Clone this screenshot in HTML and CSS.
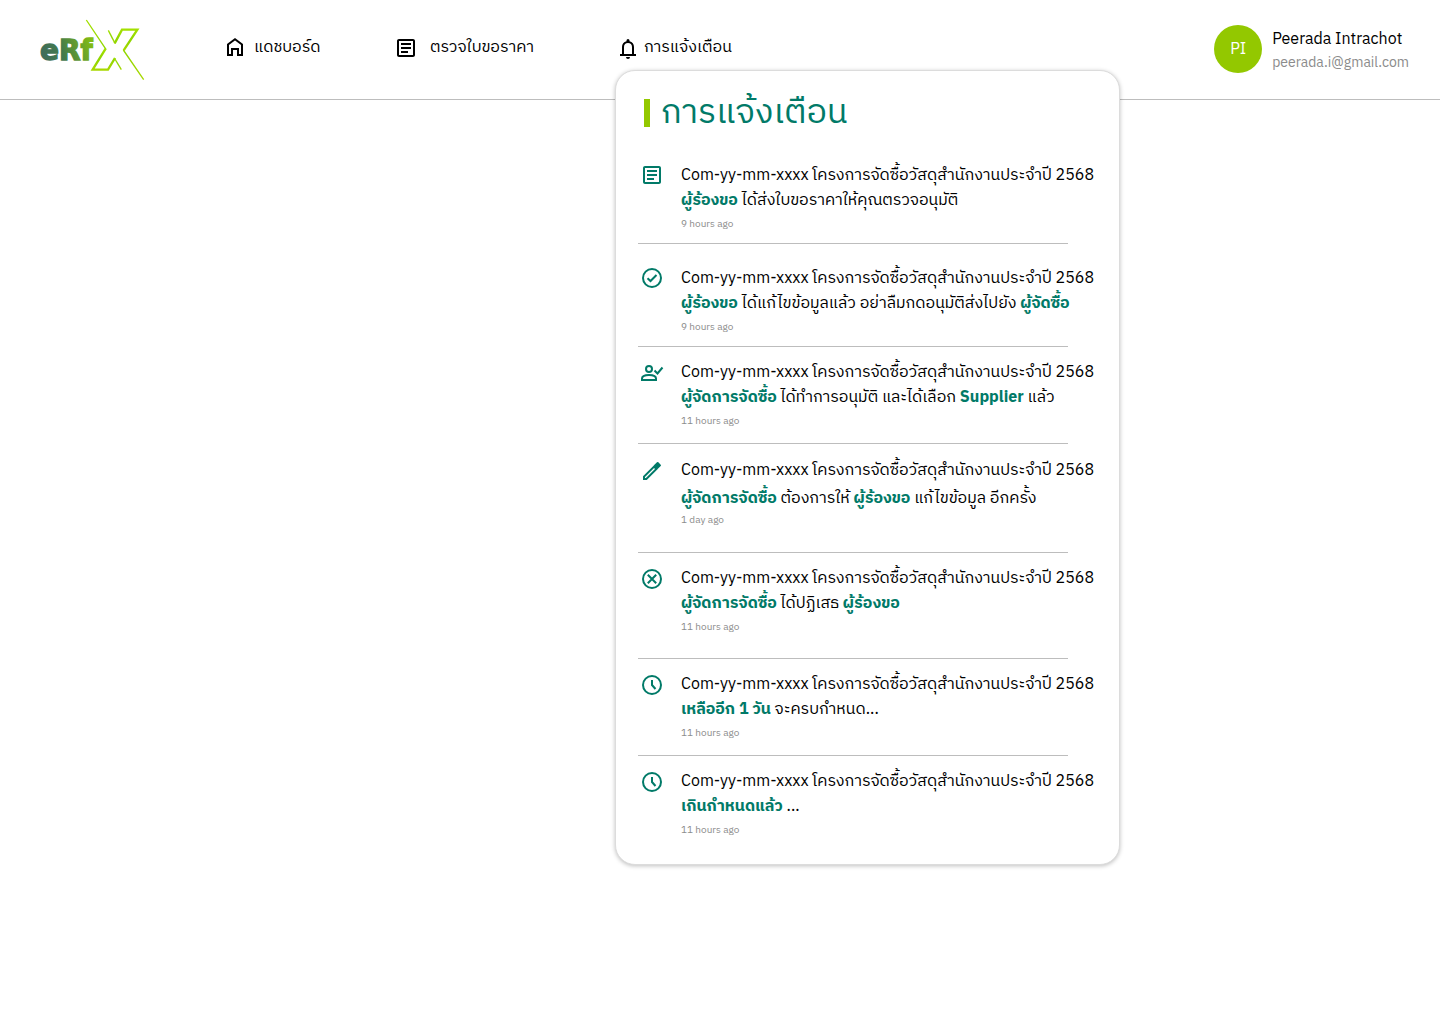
FILE: index.html
```html
<!DOCTYPE html>
<html lang="th">
<head>
<meta charset="utf-8">
<meta name="viewport" content="width=device-width, initial-scale=1">
<title>eRfX</title>
<link rel="stylesheet" href="styles.css">
</head>
<body>
<svg class="sprite" aria-hidden="true">
  <symbol id="doc" viewBox="0 0 24 24"><path d="M19 5v14H5V5h14m0-2H5c-1.100 0-2 .9-2 2v14c0 1.100.9 2 2 2h14c1.100 0 2-.9 2-2V5c0-1.100-.9-2-2-2zM14 17H7v-2h7v2zm3-4H7v-2h10v2zm0-4H7V7h10v2z"/></symbol>
  <symbol id="clock" viewBox="0 0 24 24"><circle cx="12" cy="12" r="9" fill="none" stroke="currentColor" stroke-width="2"/><path d="M12 7v5l3.500 4" fill="none" stroke="currentColor" stroke-width="2"/></symbol>
</svg>
<header class="topbar">
  <a class="logo" href="#" aria-label="eRfX">
    <svg viewBox="24 24 324 189" width="108" height="63">
      <defs>
        <linearGradient id="word" gradientUnits="userSpaceOnUse" x1="30" y1="150" x2="196" y2="90"><stop offset="0" stop-color="#3f6a5c"/><stop offset="0.400" stop-color="#437a4c"/><stop offset="1" stop-color="#8ac50c"/></linearGradient>
        <linearGradient id="cross" x1="0" y1="0" x2="0" y2="1"><stop offset="0" stop-color="#a3e000"/><stop offset="0.500" stop-color="#8ed600"/><stop offset="1" stop-color="#a8d800"/></linearGradient>
      </defs>
      <text class="logo-word" x="30" y="149" fill="url(#word)" stroke="url(#word)">eRf</text>
      <g fill="none" stroke="url(#cross)">
        <path stroke-width="4" d="M169 30 228 118M280 120 341 209"/>
        <path stroke-width="7" d="M227 116 188 179H234L255 144"/>
        <path stroke-width="4" d="M253 144 274 179"/>
        <path stroke-width="4" d="M235 61 255 100"/>
        <path stroke-width="7" d="M254 100 276 59H322L281 121"/>
      </g>
    </svg>
  </a>
  <nav class="nav">
    <a class="nav-link" href="#">
      <svg class="icon" viewBox="0 0 24 24"><path d="M5 19V8.500L12 3.200 19 8.500V19H15V13H9V19Z" fill="none" stroke="currentColor" stroke-width="2"/></svg>
      แดชบอร์ด
    </a>
    <a class="nav-link" href="#"><svg class="icon"><use href="#doc"/></svg>ตรวจใบขอราคา</a>
    <div class="nav-menu">
      <a class="nav-link" href="#notifications" aria-expanded="true">
        <svg class="icon" viewBox="0 0 24 24"><path d="M4 20v-2h2v-7c0-2.790 1.640-5.200 4.500-5.800V4.500a1.500 1.500 0 0 1 3 0v.7C16.360 5.800 18 8.210 18 11v7h2v2H4zm8 3a2 2 0 0 1-2-2h4a2 2 0 0 1-2 2zm-4-5h8v-7c0-2.480-1.510-4-4-4s-4 1.520-4 4v7z"/></svg>
        การแจ้งเตือน
      </a>
      <section class="panel" id="notifications">
        <h1 class="panel-title">การแจ้งเตือน</h1>
        <ul class="list">
          <li class="item item-compact">
            <svg class="icon"><use href="#doc"/></svg>
            <div class="body">
              <p>Com-yy-mm-xxxx โครงการจัดซื้อวัสดุสำนักงานประจำปี 2568</p>
              <p><b>ผู้ร้องขอ</b> ได้ส่งใบขอราคาให้คุณตรวจอนุมัติ</p>
              <time>9 hours ago</time>
            </div>
          </li>
          <li class="item item-compact item-spaced">
            <svg class="icon" viewBox="0 0 24 24"><g fill="none" stroke="currentColor" stroke-width="2"><circle cx="12" cy="12" r="9"/><path d="M7.500 12.200 10.500 15 16.500 9"/></g></svg>
            <div class="body">
              <p>Com-yy-mm-xxxx โครงการจัดซื้อวัสดุสำนักงานประจำปี 2568</p>
              <p><b>ผู้ร้องขอ</b> ได้แก้ไขข้อมูลแล้ว อย่าลืมกดอนุมัติส่งไปยัง <b>ผู้จัดซื้อ</b></p>
              <time>9 hours ago</time>
            </div>
          </li>
          <li class="item">
            <svg class="icon" viewBox="0 0 24 24"><g fill="none" stroke="currentColor" stroke-width="2"><circle cx="9" cy="8" r="3"/><path d="M2 19V17.500C2 15 6 14 9 14S16 15 16 17.500V19Z"/><path d="M14.500 9.500 17.500 12.500 22.500 6.500"/></g></svg>
            <div class="body">
              <p>Com-yy-mm-xxxx โครงการจัดซื้อวัสดุสำนักงานประจำปี 2568</p>
              <p><b>ผู้จัดการจัดซื้อ</b> ได้ทำการอนุมัติ และได้เลือก <b>Supplier</b> แล้ว</p>
              <time>11 hours ago</time>
            </div>
          </li>
          <li class="item item-loose">
            <svg class="icon" viewBox="0 0 24 24"><path d="M3 17.250V21h3.750L17.810 9.940l-3.750-3.750L3 17.250zM5.920 19H5v-.92l9.060-9.060.92.92L5.920 19zM20.710 5.630l-2.340-2.340a1 1 0 0 0-1.410 0l-3.300 3.300 3.750 3.750 3.300-3.300a1 1 0 0 0 0-1.410z"/></svg>
            <div class="body">
              <p>Com-yy-mm-xxxx โครงการจัดซื้อวัสดุสำนักงานประจำปี 2568</p>
              <p><b>ผู้จัดการจัดซื้อ</b> ต้องการให้ <b>ผู้ร้องขอ</b> แก้ไขข้อมูล อีกครั้ง</p>
              <time>1 day ago</time>
            </div>
          </li>
          <li class="item item-tall">
            <svg class="icon" viewBox="0 0 24 24"><g fill="none" stroke="currentColor" stroke-width="2"><circle cx="12" cy="12" r="9"/><path d="M7.800 7.800 16.200 16.200M16.200 7.800 7.800 16.200"/></g></svg>
            <div class="body">
              <p>Com-yy-mm-xxxx โครงการจัดซื้อวัสดุสำนักงานประจำปี 2568</p>
              <p><b>ผู้จัดการจัดซื้อ</b> ได้ปฏิเสธ <b>ผู้ร้องขอ</b></p>
              <time>11 hours ago</time>
            </div>
          </li>
          <li class="item">
            <svg class="icon"><use href="#clock"/></svg>
            <div class="body">
              <p>Com-yy-mm-xxxx โครงการจัดซื้อวัสดุสำนักงานประจำปี 2568</p>
              <p><b>เหลืออีก 1 วัน</b> จะครบกำหนด...</p>
              <time>11 hours ago</time>
            </div>
          </li>
          <li class="item">
            <svg class="icon"><use href="#clock"/></svg>
            <div class="body">
              <p>Com-yy-mm-xxxx โครงการจัดซื้อวัสดุสำนักงานประจำปี 2568</p>
              <p><b>เกินกำหนดแล้ว</b> ...</p>
              <time>11 hours ago</time>
            </div>
          </li>
        </ul>
      </section>
    </div>
  </nav>
  <div class="user">
    <span class="avatar">PI</span>
    <div class="user-text">
      <p class="user-name">Peerada Intrachot</p>
      <p class="user-mail">peerada.i@gmail.com</p>
    </div>
  </div>
</header>
</body>
</html>
```

FILE: styles.css
```css
:root {
  --teal: #017a68;
  --lime: #93c800;
  --line: #bdbdbd;
  --muted: #8c8c8c;
}

* { box-sizing: border-box; }

body {
  margin: 0;
  min-height: 100vh;
  background: #fff;
  color: #000;
  font: 16px/25px "IBM Plex Sans Thai", "Noto Sans", "Noto Sans Thai", sans-serif;
}

p, ul, h1 { margin: 0; padding: 0; }

.sprite { position: absolute; width: 0; height: 0; }

.icon {
  flex: none;
  width: 24px;
  height: 24px;
  fill: currentColor;
}

.topbar {
  display: flex;
  align-items: center;
  height: 100px;
  padding: 0 31px 4px 38px;
  border-bottom: 1px solid var(--line);
}

.logo { display: flex; flex: none; margin-top: 4px; }

.logo-word {
  font: 900 84px "DejaVu Sans", sans-serif;
  stroke-width: 4px;
}

.nav {
  display: flex;
  margin-left: 77px;
}

.nav-link {
  display: flex;
  align-items: center;
  gap: 7px;
  width: 171px;
  color: #000;
  text-decoration: none;
  white-space: nowrap;
}

.nav-link:nth-child(2) { gap: 12px; width: 222px; }

.nav-menu { position: relative; }

.nav-menu .nav-link { gap: 4px; width: auto; }

.panel {
  position: absolute;
  top: 35px;
  left: -1px;
  width: 505px;
  padding: 22px 24px 12px 22px;
  background: #fff;
  border: 1px solid #dcdcdc;
  border-radius: 20px;
  box-shadow: 0 1px 4px rgba(0, 0, 0, 0.25);
}

.panel-title {
  display: flex;
  align-items: center;
  gap: 11px;
  margin: 0 0 30px 6px;
  color: var(--teal);
  font-size: 34px;
  font-weight: 400;
  line-height: 40px;
}

.panel-title::before {
  content: "";
  width: 6px;
  height: 28px;
  background: var(--lime);
}

.list { width: 430px; list-style: none; }

.item {
  display: flex;
  gap: 17px;
  padding: 13px 0 11px 2px;
  border-bottom: 1px solid var(--line);
  white-space: nowrap;
}

.item:first-child { padding-top: 0; }
.item:last-child { border-bottom: 0; }
.item-compact { padding-bottom: 8px; }
.item-spaced { padding-top: 22px; }
.item-tall { padding-bottom: 20px; }
.item-loose { padding-top: 14px; padding-bottom: 23px; }
.item-loose p + p { margin-top: 3px; }

.item .icon { margin-top: 1px; color: var(--teal); }
.item-compact .icon { margin-top: 0; }

.body b { color: var(--teal); font-weight: 700; }

.body time {
  display: block;
  color: var(--muted);
  font-size: 10px;
  line-height: 22px;
}

.item-loose time { line-height: 18px; }

.user {
  display: flex;
  align-items: center;
  gap: 10px;
  margin-left: auto;
  padding-top: 3px;
}

.avatar {
  display: grid;
  place-items: center;
  width: 48px;
  height: 48px;
  border-radius: 50%;
  background: var(--lime);
  color: #fff;
}

.user-text { padding-top: 3px; line-height: 23px; white-space: nowrap; }
.user-mail { color: var(--muted); font-size: 14px; }
```
